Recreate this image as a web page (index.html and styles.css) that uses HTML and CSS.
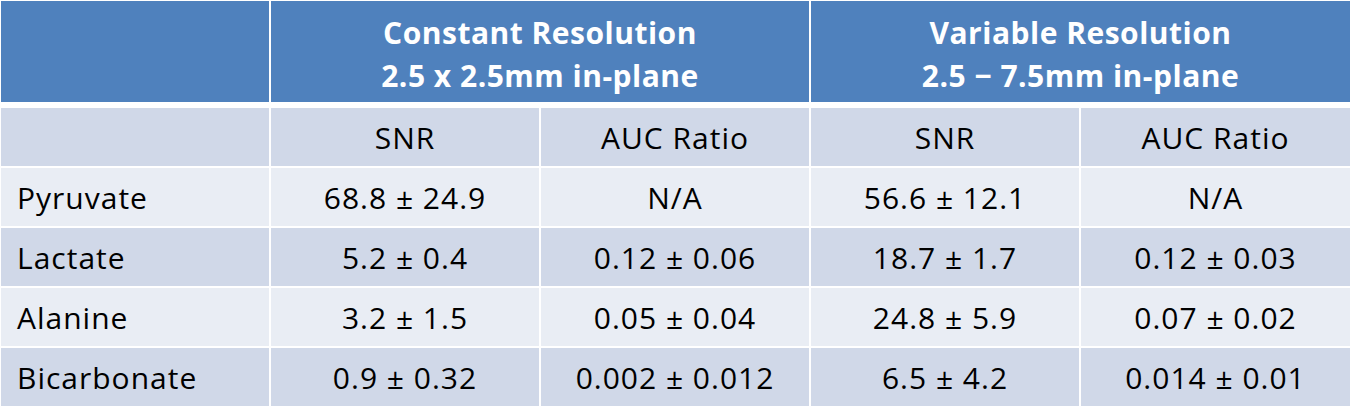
FILE: index.html
```html
<!DOCTYPE html>
<html lang="en">
<head>
  <meta charset="UTF-8" />
  <title>Resolution comparison</title>
  <link rel="stylesheet" href="styles.css">
</head>
<body>
  <table class="results">
    <colgroup>
      <col class="c-name" />
      <col /><col /><col /><col />
    </colgroup>
    <thead>
      <tr class="group">
        <th></th>
        <th colspan="2">Constant Resolution<br />2.5 x 2.5mm in-plane</th>
        <th colspan="2">Variable Resolution<br />2.5 &minus; 7.5mm in-plane</th>
      </tr>
    </thead>
    <tbody>
      <tr class="odd">
        <td></td>
        <td>SNR</td>
        <td>AUC Ratio</td>
        <td>SNR</td>
        <td>AUC Ratio</td>
      </tr>
      <tr class="even">
        <td class="name">Pyruvate</td>
        <td>68.8 &plusmn; 24.9</td>
        <td>N/A</td>
        <td>56.6 &plusmn; 12.1</td>
        <td>N/A</td>
      </tr>
      <tr class="odd">
        <td class="name">Lactate</td>
        <td>5.2 &plusmn; 0.4</td>
        <td>0.12 &plusmn; 0.06</td>
        <td>18.7 &plusmn; 1.7</td>
        <td>0.12 &plusmn; 0.03</td>
      </tr>
      <tr class="even">
        <td class="name">Alanine</td>
        <td>3.2 &plusmn; 1.5</td>
        <td>0.05 &plusmn; 0.04</td>
        <td>24.8 &plusmn; 5.9</td>
        <td>0.07 &plusmn; 0.02</td>
      </tr>
      <tr class="odd">
        <td class="name">Bicarbonate</td>
        <td>0.9 &plusmn; 0.32</td>
        <td>0.002 &plusmn; 0.012</td>
        <td>6.5 &plusmn; 4.2</td>
        <td>0.014 &plusmn; 0.01</td>
      </tr>
    </tbody>
  </table>
</body>
</html>
```

FILE: styles.css
```css
body {
  margin: 0;
  padding: 1px;
  background: #fff;
  font-family: "Open Sans", Lato, sans-serif;
}
.results {
  width: 1349px;
  border-collapse: collapse;
  table-layout: fixed;
  font-size: 30px;
  letter-spacing: 1px;
  color: #000;
}
.results .c-name {
  width: 269px;
}
.results th,
.results td {
  border: 2px solid #fff;
  text-align: center;
  padding: 0;
}
/* intestazione blu */
.group th {
  background: #4f81bd;
  color: #fff;
  font-weight: bold;
  letter-spacing: 0.5px;
  height: 96px;
  line-height: 43px;
  padding-top: 5px;
  border-bottom: 6px solid #fff;
  border-top: 0;
}
.results tr > :first-child {
  border-left: 0;
}
.results tr > :last-child {
  border-right: 0;
}
.results tbody td {
  height: 58px;
}
.results td.name {
  text-align: left;
  padding-left: 16px;
}
.odd td {
  background: #d0d8e8;
}
.even td {
  background: #e9edf4;
}
```
